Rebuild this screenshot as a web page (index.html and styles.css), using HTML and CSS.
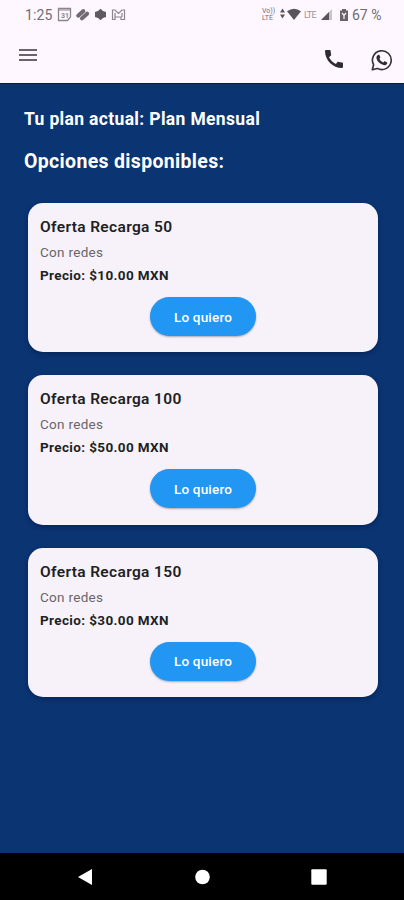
FILE: index.html
```html
<!DOCTYPE html>
<html lang="es">
<head>
<meta charset="utf-8">
<title>Opciones disponibles</title>
<link rel="stylesheet" href="styles.css">
</head>
<body>
<div class="screen">
  <header class="top">
    <div class="status">
      <span class="clock">1:25</span>
      <svg class="notif" width="70" height="16" viewBox="0 0 70 16" fill="none">
        <path d="M1.500 1.500h12v8.500l-3 3.500h-9z" stroke="#8b858d" stroke-width="1.300"/>
        <path d="M1.500 3h12" stroke="#8b858d"/>
        <text class="day" x="4" y="10.500">31</text>
        <g transform="rotate(-42 25.500 7.500)" fill="#716c73"><rect x="19.500" y="3.500" width="11" height="4" rx="2"/><rect x="20.500" y="8" width="11" height="4" rx="2"/></g>
        <path d="M43.500 1.800l2.500 2.200 3 1v5l-3 1-2.500 2.200L41 11l-3-1V5l3-1z" fill="#5f5a61"/>
        <path d="M55.500 3v9.500h2.500V10h6v2.500h3.500V3h-2.500l-3.500 3.500L58 3zM58 6v4M65 6v4" stroke="#8b858d" stroke-width="1.200"/>
      </svg>
      <span class="space"></span>
      <span class="volte"><span>Vo))</span><span>LTE</span></span>
      <svg class="signals" width="24" height="16" viewBox="0 0 24 16" fill="#59545b">
        <path d="M2.500 1.500L5 5.500H0zM2.500 11.500L0 7.500h5z"/>
        <path d="M7 4.200Q14 -.8 21 4.200L14 13z"/>
      </svg>
      <span class="lte">LTE</span>
      <svg class="bars" width="12" height="12" viewBox="0 0 12 12"><path d="M11 0v11H0z" fill="#c9c3ca"/><path d="M8 3v8H0z" fill="#59545b"/></svg>
      <svg class="battery" width="10" height="14" viewBox="0 0 10 14"><path d="M3 1h4v1.500h2V13H1V2.500h2z" fill="#686269"/><path d="M3 5l2 2.500L7 5M5 7v4" stroke="#f6eff7" stroke-width="1.300" fill="none"/></svg>
      <span class="percent">67 %</span>
    </div>
    <nav class="appbar">
      <svg class="menu" width="18" height="14" viewBox="0 0 18 14" stroke="#68646a" stroke-width="2"><path d="M0 2h18M0 7h18M0 12h18"/></svg>
      <span class="space"></span>
      <svg class="call" width="18" height="18" viewBox="3 3 18 18"><path fill="#302d32" d="M20.010 15.380c-1.230 0-2.420-.2-3.530-.56-.35-.12-.74-.03-1.010.24l-1.570 1.970c-2.830-1.350-5.480-3.900-6.890-6.830l1.950-1.660c.27-.28.35-.67.24-1.020-.37-1.110-.56-2.300-.56-3.530 0-.54-.45-.99-.99-.99H4.190C3.650 3 3 3.240 3 3.990 3 13.280 10.730 21 20.010 21c.71 0 .99-.63.99-1.180v-3.450c0-.54-.45-.99-.99-.99z"/></svg>
      <svg class="whatsapp" width="22" height="22" viewBox="0 0 22 22"><path d="M1.300 20.700l1.300-5A9.400 9.400 0 1 1 6.300 19.400z" fill="none" stroke="#353137" stroke-width="1.600" stroke-linejoin="round"/><path d="M7.600 5.700c.5 0 .7.100.9.600l.8 1.900c.1.400-.1.700-.9 1.600.8 1.700 2 2.800 3.900 3.600.8-.8 1-1.400 1.500-1.200l2.100 1c.5.300.4.900.2 1.500-.5 1.200-2.200 1.700-3.500 1.400-3.600-.9-6.400-3.500-7.100-6.500-.4-1.600.6-3.900 2.100-3.900z" fill="#302d32"/></svg>
    </nav>
  </header>
  <main class="content">
    <h2 class="plan">Tu plan actual: Plan Mensual</h2>
    <h1 class="heading">Opciones disponibles:</h1>
    <div class="offers">
      <section class="card">
        <h3 class="title">Oferta Recarga 50</h3>
        <p class="detail">Con redes</p>
        <p class="price">Precio: $10.00 MXN</p>
        <button class="buy">Lo quiero</button>
      </section>
      <section class="card">
        <h3 class="title">Oferta Recarga 100</h3>
        <p class="detail">Con redes</p>
        <p class="price">Precio: $50.00 MXN</p>
        <button class="buy">Lo quiero</button>
      </section>
      <section class="card">
        <h3 class="title">Oferta Recarga 150</h3>
        <p class="detail">Con redes</p>
        <p class="price">Precio: $30.00 MXN</p>
        <button class="buy">Lo quiero</button>
      </section>
    </div>
  </main>
  <footer class="navbar">
    <svg width="16" height="18" viewBox="0 0 16 18"><path d="M15 1v16L1 9z" fill="#fff"/></svg>
    <svg width="16" height="16" viewBox="0 0 16 16"><circle cx="8.500" cy="8" r="7.300" fill="#fff"/></svg>
    <svg width="16" height="16" viewBox="0 0 16 16"><rect x=".3" y=".3" width="15.400" height="15.400" rx="1" fill="#fff"/></svg>
  </footer>
</div>
</body>
</html>
```
FILE: styles.css
```css
* { box-sizing: border-box; }
body { margin: 0; font-family: Roboto, sans-serif; }
h1, h2, h3, p { margin: 0; white-space: nowrap; }
svg { display: block; flex: none; }
.screen { width: 404px; height: 900px; display: flex; flex-direction: column; background: #0b3472; }
.top { height: 84px; background: #fef7ff; border-bottom: 1px solid #06175a; }
.status { height: 29px; padding: 0 22px 0 25px; display: flex; align-items: center; color: #716c73; }
.clock { width: 32px; font-size: 14px; letter-spacing: .1px; }
.day { font: 700 7px Roboto, sans-serif; fill: #8b858d; }
.space { flex: 1; }
.volte { display: flex; flex-direction: column; width: 18px; font-size: 7px; line-height: 7px; }
.lte { width: 17px; font-size: 9px; letter-spacing: -.8px; color: #9a949c; }
.battery { margin: 0 3px 0 6px; }
.percent { width: 30px; font-size: 14px; white-space: nowrap; }
.appbar { height: 53px; padding: 0 11px 0 19px; display: flex; align-items: center; }
.menu { margin-bottom: 1px; }
.call { margin: 6px 28px 0 0; }
.whatsapp { margin-top: 8px; }
.content { flex: 1; padding: 23px 26px 0 24px; color: #fff; }
.plan { font-size: 17.500px; line-height: 24px; letter-spacing: .34px; }
.heading { margin-top: 18px; font-size: 19.500px; line-height: 26px; letter-spacing: .33px; }
.offers { margin: 28px 0 0 4px; display: flex; flex-direction: column; gap: 23px; }
.card { height: 149.300px; padding: 13px 12px; border-radius: 15px; background: #f7f2fa; color: #211f24; box-shadow: 0 2px 4px #06265a; display: flex; flex-direction: column; }
.title { font-size: 15.500px; line-height: 22px; font-weight: 600; letter-spacing: .35px; }
.detail { margin-top: 4px; font-size: 13.500px; line-height: 20px; color: #69656b; letter-spacing: .3px; }
.price { margin-top: 3px; font-size: 13.500px; line-height: 20px; font-weight: 700; letter-spacing: .37px; }
.buy { align-self: center; margin-top: 12px; width: 106px; height: 39px; flex: none; border: 0; border-radius: 20px; background: #2196f3; color: #fff; font: 500 13.500px Roboto, sans-serif; letter-spacing: .2px; padding: 0; box-shadow: 0 1px 2px #a6a6b4; }
.navbar { height: 47px; background: #000; padding: 0 77px; display: flex; align-items: center; justify-content: space-between; }
```
